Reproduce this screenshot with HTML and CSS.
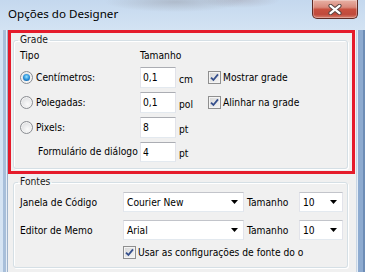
FILE: index.html
```html
<!DOCTYPE html>
<html lang="pt">
<head>
  <meta charset="UTF-8" />
  <meta name="viewport" content="width=device-width, initial-scale=1.0" />
  <title>Opções do Designer</title>
  <link rel="stylesheet" href="styles.css">
</head>
<body>
  <div class="window">
    <!-- Barra de título -->
    <div class="titlebar">
      <span class="title">Opções do Designer</span>
      <button class="close-btn" type="button" title="Fechar">
        <svg width="16" height="11" viewBox="0 0 16 11">
          <path d="M3.5 1.8 L12.5 9.2 M12.5 1.8 L3.5 9.2" stroke="#5a4643" stroke-width="4.2" stroke-linecap="round" fill="none"/>
          <path d="M3.5 1.8 L12.5 9.2 M12.5 1.8 L3.5 9.2" stroke="#ffffff" stroke-width="2.2" stroke-linecap="round" fill="none"/>
        </svg>
      </button>
    </div>

    <div class="client">
      <!-- Grade -->
      <fieldset class="group">
        <legend>Grade</legend>
        <div class="grade-grid">
          <span class="head">Tipo</span>
          <span class="head wide">Tamanho</span>

          <label class="opt"><span class="radio checked"></span>Centímetros:</label>
          <input class="edit" type="text" value="0,1" />
          <span class="unit">cm</span>
          <label class="opt chk-opt"><span class="check"><svg width="9" height="9" viewBox="0 0 9 9"><path d="M1 4.6 L3.4 7 L8 1.4" stroke="#354f8c" stroke-width="1.8" fill="none"/></svg></span>Mostrar grade</label>

          <label class="opt"><span class="radio"></span>Polegadas:</label>
          <input class="edit" type="text" value="0,1" />
          <span class="unit">pol</span>
          <label class="opt chk-opt"><span class="check"><svg width="9" height="9" viewBox="0 0 9 9"><path d="M1 4.6 L3.4 7 L8 1.4" stroke="#354f8c" stroke-width="1.8" fill="none"/></svg></span>Alinhar na grade</label>

          <label class="opt"><span class="radio"></span>Pixels:</label>
          <input class="edit" type="text" value="8" />
          <span class="unit">pt</span>
          <span></span>

          <label class="opt form-label last">Formulário de diálogo</label>
          <input class="edit last" type="text" value="4" />
          <span class="unit last">pt</span>
        </div>
      </fieldset>

      <!-- Fontes -->
      <fieldset class="group fonts">
        <legend>Fontes</legend>
        <div class="fonts-grid">
          <span class="opt">Janela de Código</span>
          <div class="combo"><span>Courier New</span><svg width="7" height="4" viewBox="0 0 7 4"><path d="M0 0h7l-3.5 4z" fill="#000"/></svg></div>
          <span class="opt size-label">Tamanho</span>
          <div class="combo"><span>10</span><svg width="7" height="4" viewBox="0 0 7 4"><path d="M0 0h7l-3.5 4z" fill="#000"/></svg></div>

          <span class="opt">Editor de Memo</span>
          <div class="combo"><span>Arial</span><svg width="7" height="4" viewBox="0 0 7 4"><path d="M0 0h7l-3.5 4z" fill="#000"/></svg></div>
          <span class="opt size-label">Tamanho</span>
          <div class="combo"><span>10</span><svg width="7" height="4" viewBox="0 0 7 4"><path d="M0 0h7l-3.5 4z" fill="#000"/></svg></div>

          <label class="opt chk-opt use-fonts"><span class="check"><svg width="9" height="9" viewBox="0 0 9 9"><path d="M1 4.6 L3.4 7 L8 1.4" stroke="#354f8c" stroke-width="1.8" fill="none"/></svg></span>Usar as configurações de fonte do o</label>
        </div>
      </fieldset>
    </div>

    <!-- Destaque vermelho -->
    <div class="highlight"></div>
  </div>
</body>
</html>
```

FILE: styles.css
```css
body {
  margin: 0;
  font-family: 'DejaVu Sans Condensed', 'Liberation Sans', Arial, sans-serif;
  font-size: 10.2px;
  color: #000;
}
.window {
  position: relative;
  width: 365px;
  height: 272px;
  box-sizing: border-box;
  padding: 0 9px 0 8px;
  display: flex;
  flex-direction: column;
  overflow: hidden;
  background:
    radial-gradient(ellipse 70px 10px at 175px 2px, rgba(110,100,100,0.25), transparent),
    radial-gradient(ellipse 40px 8px at 240px 0, rgba(120,90,90,0.2), transparent),
    linear-gradient(#c4d8ee, #d3e3f3 30px, #d6e4f3);
}
.titlebar {
  height: 30px;
  flex: none;
  display: flex;
  justify-content: space-between;
  align-items: flex-start;
  margin-right: -2px;
}
.title {
  font-family: 'Noto Sans', 'Open Sans', sans-serif;
  font-size: 11.6px;
  margin-top: 6px;
  color: #000;
}
.close-btn {
  width: 46px;
  height: 19px;
  padding: 0;
  border: 1px solid #5e2c26;
  border-top: none;
  border-radius: 0 0 5px 5px;
  background: linear-gradient(#e8b1a5, #d98a7c 40%, #c8503f 52%, #c04a3c 80%, #d6806f);
  box-shadow: inset 0 0 0 1px rgba(255,255,255,0.3);
  display: flex;
  align-items: center;
  justify-content: center;
}
.client {
  flex: 1;
  background: #f0f0f0;
  padding-top: 3px;
  box-shadow: -1px 0 0 #9fb3cb, -2px 0 0 #e4edf7, -5px 0 0 #a8bfda,
              1px 0 0 #c9d6e4, 2px 0 0 #e4edf7, 7px 0 0 #8eabd0, 9px 0 0 #6e8db6;
}

/* Grupos */
.group {
  margin: 0 8px 0 5px;
  padding: 0 6px 6px;
  border: 1px solid #d5dfe5;
  border-radius: 3px;
  box-shadow: inset 1px 1px 0 #fff, 1px 1px 0 #fff;
  min-width: 0;
}
.group legend {
  padding: 0 2px;
  margin-left: -2px;
  line-height: 14px;
  color: #1a1a1a;
}
.group.fonts {
  margin-top: 6px;
}

.grade-grid {
  display: grid;
  grid-template-columns: 120px 36px 32px 1fr;
  grid-template-rows: 17px 21px 21px 21px 20px;
  row-gap: 4px;
  align-items: center;
  margin-top: -1px;
}
.head {
  align-self: end;
  line-height: 14px;
}
.head.wide {
  grid-column: 2 / span 3;
}
.opt {
  display: flex;
  align-items: center;
  white-space: nowrap;
}
.form-label {
  padding-left: 18px;
}
.last {
  margin-top: -2px;
}
.unit {
  padding-left: 3px;
  padding-top: 4px;
}
.edit {
  width: 36px;
  height: 21px;
  box-sizing: border-box;
  margin: 0;
  padding: 0 0 0 2px;
  font: inherit;
  color: #000;
  background: #fff;
  border: 1px solid;
  border-color: #abadb3 #e2e3ea #e3e9ef #e2e3ea;
  border-radius: 0;
  outline: none;
}
.edit.last {
  height: 20px;
}

/* Radios e checkboxes */
.radio {
  position: relative;
  width: 13px;
  height: 13px;
  box-sizing: border-box;
  border-radius: 50%;
  border: 1px solid #8a8d92;
  background: radial-gradient(circle at 60% 65%, #fbfbfb, #d4d5d8);
  box-shadow: inset 0 0 0 1px #f4f4f4;
  margin-right: 3px;
  flex: none;
}
.radio.checked::after {
  content: "";
  position: absolute;
  left: 2px;
  top: 2px;
  width: 7px;
  height: 7px;
  border-radius: 50%;
  background: radial-gradient(circle at 50% 40%, #9be6ff, #2189d6 55%, #0c4a8a);
}
.check {
  width: 13px;
  height: 13px;
  box-sizing: border-box;
  border: 1px solid #8f8f8f;
  background: linear-gradient(135deg, #d6d6d6, #f6f6f6);
  box-shadow: inset 0 0 0 1px #f4f4f4;
  display: flex;
  align-items: center;
  justify-content: center;
  margin-right: 2px;
  flex: none;
}

/* Fontes */
.fonts-grid {
  display: grid;
  grid-template-columns: 103px 121px 55px 44px;
  grid-template-rows: 20px 20px 13px;
  row-gap: 8px;
  padding-top: 3px;
  align-items: center;
}
.size-label {
  padding-left: 3px;
}
.combo {
  height: 20px;
  box-sizing: border-box;
  background: #fff;
  border: 1px solid;
  border-color: #c2c4ca #e2e3ea #e3e9ef #e2e3ea;
  display: flex;
  align-items: center;
  justify-content: space-between;
  padding: 0 5px 0 3px;
}
.use-fonts {
  grid-column: 2 / span 3;
  margin-top: -4px;
}

/* Destaque sobre o grupo Grade */
.highlight {
  position: absolute;
  left: 8px;
  top: 30px;
  width: 347px;
  height: 144px;
  box-sizing: border-box;
  border: 3px solid #e51b2b;
  pointer-events: none;
}
```
